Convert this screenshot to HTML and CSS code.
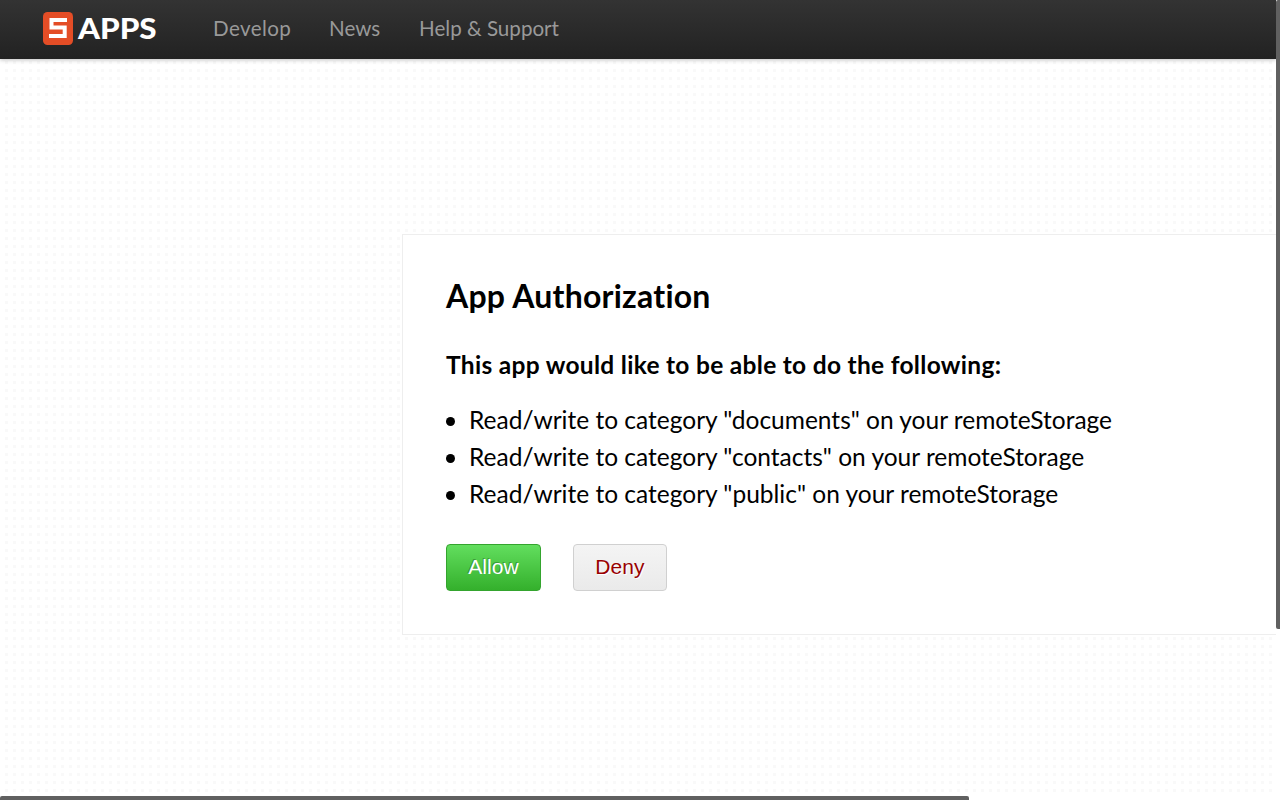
FILE: index.html
```html
<!DOCTYPE html>
<html lang="en">
<head>
<meta charset="utf-8">
<title>5apps - App Authorization</title>
<link rel="stylesheet" href="styles.css">
</head>
<body>
<div class="viewport">
  <header class="topbar">
    <a class="logo" href="#">
      <svg class="logo-mark" width="30" height="33" viewBox="0 0 30 33">
        <rect width="30" height="33" rx="4.5" fill="#e44d26"/>
        <path d="M24 8H8.500V15.500H21.700V24H6" fill="none" stroke="#fff" stroke-width="4"/>
      </svg>
      <span class="logo-text">APPS</span>
    </a>
    <nav class="nav">
      <a class="nav-develop" href="#">Develop</a>
      <a class="nav-news" href="#">News</a>
      <a class="nav-help" href="#">Help &amp; Support</a>
    </nav>
  </header>
  <main class="panel">
    <h1>App Authorization</h1>
    <h2>This app would like to be able to do the following:</h2>
    <ul class="scopes">
      <li>Read/write to category "documents" on your remoteStorage</li>
      <li>Read/write to category "contacts" on your remoteStorage</li>
      <li>Read/write to category "public" on your remoteStorage</li>
    </ul>
    <div class="actions">
      <button class="btn allow">Allow</button>
      <button class="btn deny">Deny</button>
    </div>
  </main>
</div>
<div class="scroll-y"></div>
<div class="scroll-x"></div>
</body>
</html>
```
FILE: styles.css
```css
* { box-sizing: border-box; }
html, body { height: 100%; overflow: hidden; }
body { margin: 0; background: #fff; color: #000; font-family: Lato, sans-serif; font-variant-ligatures: none; }
.viewport {
  width: 1276px; height: 796px; overflow: hidden;
  background: conic-gradient(from 90deg at 5px 5px, #f9f9f9 90deg, #fff 0) 0 0 / 8px 8px;
}
.topbar {
  display: flex; height: 59px; padding-left: 43px;
  background: linear-gradient(#333, #222);
  box-shadow: 0 1px 4px rgba(0,0,0,.25);
}
.logo { display: flex; width: 170px; padding-top: 12px; text-decoration: none; color: #fff; }
.logo-text { margin-left: 5px; font-size: 28px; line-height: 32px; font-weight: 900; transform: scaleX(1.12); transform-origin: left; }
.nav { display: flex; gap: 38px; font-size: 20.6px; line-height: 56px; white-space: nowrap; }
.nav a { color: #999; text-decoration: none; }
.nav-develop { width: 78px; letter-spacing: .4px; }
.nav-news { width: 52px; }
.panel {
  width: 960px; height: 401px; margin: 175px 0 0 402px; padding: 42px 43px;
  background: #fff; border: 1px solid #eee; white-space: nowrap;
}
h1 { margin: 0; font-size: 32px; line-height: 37px; font-weight: 700; letter-spacing: .23px; }
h2 { margin: 32px 0 0; font-size: 24.5px; line-height: 37px; font-weight: 700; letter-spacing: .3px; }
.scopes { margin: 18px 0 0; padding: 0 0 0 23px; font-size: 24.5px; line-height: 37px; list-style: none; }
.scopes li { display: flex; align-items: center; }
.scopes li::before { content: ""; width: 9px; height: 9px; margin: 4px 14px 0 -23px; border-radius: 50%; background: #000; }
.actions { display: flex; gap: 32px; margin-top: 32px; }
.btn { width: 95px; height: 47px; padding: 0 0 1px; border-radius: 4px; font: 21px "Liberation Sans", sans-serif; letter-spacing: .1px; }
.allow { color: #fff; border: 1px solid #34a42e; background: linear-gradient(#62de5e, #34b02c); text-shadow: -1px -1px 0 rgba(0,0,0,.25); }
.deny { width: 94px; color: #900; border: 1px solid #d0d0d0; background: linear-gradient(#f4f4f4, #eaeaea); text-shadow: 1px 1px 0 #fff; }
.scroll-y { position: absolute; top: 0; right: 0; width: 4px; height: 629px; background: #606060; border-radius: 2px 0 0 2px; }
.scroll-x { position: absolute; left: 0; bottom: 0; width: 969px; height: 4px; background: #606060; border-radius: 2px 2px 0 0; }
```
